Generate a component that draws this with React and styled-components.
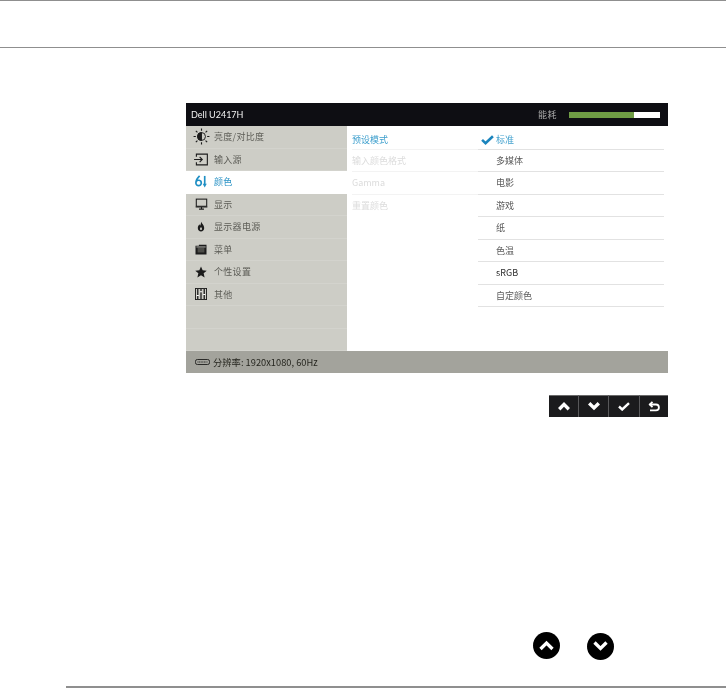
import React from 'react';
import styled, { createGlobalStyle } from 'styled-components';

const MENU = [
  { label: '亮度/对比度', icon: 'sun' },
  { label: '输入源', icon: 'input' },
  { label: '颜色', icon: 'color', active: true },
  { label: '显示', icon: 'display' },
  { label: '显示器电源', icon: 'power' },
  { label: '菜单', icon: 'menu' },
  { label: '个性设置', icon: 'star' },
  { label: '其他', icon: 'other' },
  { label: '' },
  { label: '' },
];

const SUBMENU = [
  { label: '预设模式', active: true },
  { label: '输入颜色格式' },
  { label: 'Gamma' },
  { label: '重置颜色' },
];

const OPTIONS = [
  { label: '标准', active: true },
  { label: '多媒体' },
  { label: '电影' },
  { label: '游戏' },
  { label: '纸' },
  { label: '色温' },
  { label: 'sRGB', dark: true },
  { label: '自定颜色' },
];

const MenuIcon = ({ name, color = '#1c1c1c' }) => {
  switch (name) {
    case 'sun':
      return (
        <svg width="17" height="17" viewBox="0 0 18 18" fill="none" stroke={color}>
          <circle cx="9" cy="9" r="4.2" strokeWidth="1" />
          <path d="M9 4.8a4.2 4.2 0 0 0 0 8.4z" fill={color} />
          <path d="M9 .6v2.4M9 15v2.4M.6 9H3M15 9h2.4M3 3l1.700 1.700M13.300 13.300 15 15M3 15l1.700-1.700M13.300 4.700 15 3" strokeWidth="1.200" />
        </svg>
      );
    case 'input':
      return (
        <svg width="17" height="13" viewBox="0 0 18 14" fill="none" stroke={color} strokeWidth="1.200">
          <path d="M3.500 4V1.200h11.800v11.600H3.500V10" />
          <path d="M1 7h8.500M7 4.200 9.800 7 7 9.800" />
        </svg>
      );
    case 'color':
      return (
        <svg width="14" height="13" viewBox="0 0 14 14" fill="none" stroke={color} strokeWidth="1.800">
          <path d="M5.500 1C3.500 3 1.500 5.500 1.500 8.500a2.900 2.900 0 1 0 5.800 0 2.900 2.900 0 0 0-5.600-1" />
          <path d="M11 1v9.500" />
          <path d="M8.800 9.300h4.400L11 13.500z" fill={color} stroke="none" />
        </svg>
      );
    case 'display':
      return (
        <svg width="13" height="12" viewBox="0 0 16 14" fill="none" stroke={color} strokeWidth="1.300">
          <rect x="1.600" y="1" width="12.800" height="8.800" />
          <path d="M.8 10.800h14.400M8 11v2M5 13.300h6" />
        </svg>
      );
    case 'power':
      return (
        <svg width="8" height="11" viewBox="0 0 10 13">
          <path d="M5.500.5C6 3 9 4.800 9 8.300 9 11 7.200 12.600 5 12.600S1 11 1 8.300c0-2.200 1.300-3.200 2-4.600.4 1 .7 1.400 1.200 1.700C4.600 3.800 4.800 2 5.500.5z" fill={color} />
          <path d="M5 7c.8 1 1.300 1.700 1.300 2.700A1.300 1.300 0 0 1 5 11a1.300 1.300 0 0 1-1.300-1.300C3.700 8.700 4.300 8 5 7z" fill="#cdcdc6" />
        </svg>
      );
    case 'menu':
      return (
        <svg width="12" height="11" viewBox="0 0 13 13">
          <path d="M0 2h4V.8h9V12.500H0z" fill={color} />
          <rect x="2.500" y="4.500" width="8" height="5.500" fill="#4c4c48" />
          <rect x="1" y="3" width="11" height="1" fill="#cdcdc6" />
        </svg>
      );
    case 'star':
      return (
        <svg width="12" height="12" viewBox="0 0 14 14">
          <path d="M7 .6l1.900 4.500 4.800.4-3.600 3.100 1.100 4.700L7 10.800l-4.200 2.500 1.100-4.700L.3 5.500l4.800-.4z" fill={color} />
        </svg>
      );
    case 'other':
      return (
        <svg width="12" height="12" viewBox="0 0 13 13" fill="none" stroke={color}>
          <rect x=".5" y=".5" width="12" height="12" />
          <path d="M3 1v11M6.500 1v11M10 1v11" strokeWidth="1.400" />
          <path d="M1.800 8h2.400M5.300 4h2.400M8.800 7h2.400" stroke="#fff" strokeWidth="1.100" />
        </svg>
      );
    default:
      return null;
  }
};

const Chevron = ({ up, size = 10, color = '#fff', width = 2.800 }) => (
  <svg width={size} height={size * 0.7} viewBox="0 0 10 7" fill="none" stroke={color} strokeWidth={width}>
    <path d={up ? 'M1 6l4-4 4 4' : 'M1 1l4 4 4-4'} />
  </svg>
);

const Check = ({ color = '#fff', size = 12 }) => (
  <svg width={size} height={size * 0.75} viewBox="0 0 12 9" fill="none" stroke={color} strokeWidth="2.400">
    <path d="M1 4.500l3.200 3L11 1.200" />
  </svg>
);

const BackIcon = () => (
  <svg width="12" height="11" viewBox="0 0 12 11" fill="none" stroke="#fff" strokeWidth="1.800">
    <path d="M1.500 3.500h6.500a2.800 2.800 0 0 1 0 5.800H2" />
    <path d="M4.500.8 1.800 3.500l2.700 2.700" />
  </svg>
);

const PortIcon = () => (
  <svg width="15" height="6" viewBox="0 0 15 6" fill="none" stroke="#2a2a28">
    <rect x=".5" y=".5" width="14" height="5" rx="1.800" />
    <path d="M2.500 3h10" strokeDasharray="1 .6" />
  </svg>
);

const App = () => {
  return (
    <Page>
      <GlobalStyle />
      <Header />
      <Monitor>
        <TitleBar>
          <Model>Dell U2417H</Model>
          <PowerGroup>
            <PowerLabel>能耗</PowerLabel>
            <PowerBar>
              <PowerFill />
            </PowerBar>
          </PowerGroup>
        </TitleBar>
        <Body>
          <Menu>
            {MENU.map((item, i) => (
              <MenuRow key={i} $active={item.active}>
                <IconSlot>
                  {item.icon && <MenuIcon name={item.icon} color={item.active ? '#1f8fc4' : '#1c1c1c'} />}
                </IconSlot>
                {item.label}
              </MenuRow>
            ))}
          </Menu>
          <SubMenu>
            {SUBMENU.map((item) => (
              <SubRow key={item.label} $active={item.active}>
                {item.label}
              </SubRow>
            ))}
          </SubMenu>
          <Options>
            {OPTIONS.map((item) => (
              <OptionRow key={item.label} $active={item.active} $dark={item.dark}>
                <CheckSlot>{item.active && <Check color="#1b84bd" size={13} />}</CheckSlot>
                {item.label}
              </OptionRow>
            ))}
          </Options>
        </Body>
        <StatusBar>
          <PortIcon />
          分辨率: 1920x1080, 60Hz
        </StatusBar>
      </Monitor>
      <Buttons>
        <KeyButton><Chevron up size={12} /></KeyButton>
        <KeyButton><Chevron size={12} /></KeyButton>
        <KeyButton><Check size={12} /></KeyButton>
        <KeyButton><BackIcon /></KeyButton>
      </Buttons>
      <RoundRow>
        <RoundButton><Chevron up size={15} width={2.200} /></RoundButton>
        <RoundButton $down><Chevron size={15} width={2.200} /></RoundButton>
      </RoundRow>
      <FooterRule />
    </Page>
  );
};

const GlobalStyle = createGlobalStyle`
  html, body {
    margin: 0;
    padding: 0;
    background: #fff;
  }
`;

const Page = styled.div`
  width: 726px;
  height: 688px;
  overflow: hidden;
  display: flex;
  flex-direction: column;
  font-family: "Noto Sans CJK SC", "Noto Sans", sans-serif;
`;

const Header = styled.div`
  height: 46px;
  flex: none;
  border-top: 1px solid #8f8f8f;
  border-bottom: 1px solid #8f8f8f;
`;

const Monitor = styled.div`
  width: 482px;
  height: 270px;
  flex: none;
  margin: 55px 0 0 186px;
  display: flex;
  flex-direction: column;
  filter: blur(0.3px);
`;

const TitleBar = styled.div`
  height: 23px;
  flex: none;
  background: #0e0e13;
  display: flex;
  align-items: center;
  justify-content: space-between;
  padding: 0 8px 0 5px;
`;

const Model = styled.span`
  font-family: "Lato", "Noto Sans", sans-serif;
  font-size: 9px;
  color: #f2f2f2;
`;

const PowerGroup = styled.div`
  display: flex;
  align-items: center;
  gap: 12px;
`;

const PowerLabel = styled.span`
  font-size: 9px;
  letter-spacing: 0.5px;
  color: #a9a9a9;
`;

const PowerBar = styled.div`
  width: 91px;
  height: 6px;
  background: #fff;
`;

const PowerFill = styled.div`
  width: 65px;
  height: 100%;
  background: #6f9c45;
`;

const Body = styled.div`
  flex: 1;
  display: grid;
  grid-template-columns: 161px 131px 186px 4px;
  background: #fff;
`;

const Menu = styled.div`
  display: grid;
  grid-template-rows: repeat(10, 1fr);
  background: #cdcdc6;
`;

const MenuRow = styled.div`
  display: flex;
  align-items: center;
  font-size: 9px;
  letter-spacing: 0.3px;
  color: ${(p) => (p.$active ? '#2b93c6' : '#5c5c56')};
  background: ${(p) => (p.$active ? '#fff' : 'transparent')};
  border-bottom: 1px solid ${(p) => (p.$active ? '#fff' : '#d3d3cd')};
`;

const IconSlot = styled.span`
  width: 28px;
  flex: none;
  display: flex;
  justify-content: center;
  padding-left: 2px;
  box-sizing: border-box;
`;

const SubMenu = styled.div`
  display: grid;
  grid-template-rows: 23.500px repeat(3, 22.500px);
  padding-left: 5px;
  align-content: start;
`;

const SubRow = styled.div`
  display: flex;
  align-items: center;
  font-size: 9px;
  color: ${(p) => (p.$active ? '#3d9fcd' : '#dcdcdc')};
  border-bottom: 1px solid #f3f3f3;
  &:first-child {
    padding-top: 5px;
    box-sizing: border-box;
  }
  &:last-child {
    border-bottom: 0;
  }
`;

const Options = styled.div`
  display: grid;
  grid-template-rows: 23.500px repeat(7, 22.500px);
  align-content: start;
`;

const OptionRow = styled.div`
  display: flex;
  align-items: center;
  font-size: 9px;
  color: ${(p) => (p.$active ? '#3d9fcd' : p.$dark ? '#2c2c2c' : '#5a5a5a')};
  border-bottom: 1px solid #e2e2e2;
  &:first-child {
    padding-top: 5px;
    box-sizing: border-box;
  }
`;

const CheckSlot = styled.span`
  width: 18px;
  flex: none;
  display: flex;
  justify-content: center;
  box-sizing: border-box;
`;

const StatusBar = styled.div`
  height: 22px;
  flex: none;
  background: #a3a39c;
  display: flex;
  align-items: center;
  gap: 3px;
  padding-left: 9px;
  font-size: 9.300px;
  color: #26261f;
`;

const Buttons = styled.div`
  flex: none;
  align-self: flex-start;
  margin: 22px 0 0 549px;
  display: grid;
  grid-template-columns: 29px 29px 30px 28px;
  gap: 1px;
  height: 22px;
  background: #58585a;
`;

const KeyButton = styled.div`
  background: #1b1b1d;
  border-top: 1px solid #6a6a6a;
  box-sizing: border-box;
  display: flex;
  align-items: center;
  justify-content: center;
`;

const RoundRow = styled.div`
  flex: none;
  margin: 215px 0 0 533px;
  display: flex;
  gap: 27px;
  align-items: flex-start;
`;

const RoundButton = styled.div`
  width: 27px;
  height: 27px;
  border-radius: 50%;
  background: #000;
  display: flex;
  align-items: center;
  justify-content: center;
  margin-top: ${(p) => (p.$down ? '1px' : '0')};
`;

const FooterRule = styled.div`
  flex: none;
  margin: 26px 0 0 66px;
  height: 2px;
  background: #8f8f8f;
`;

export default App;
